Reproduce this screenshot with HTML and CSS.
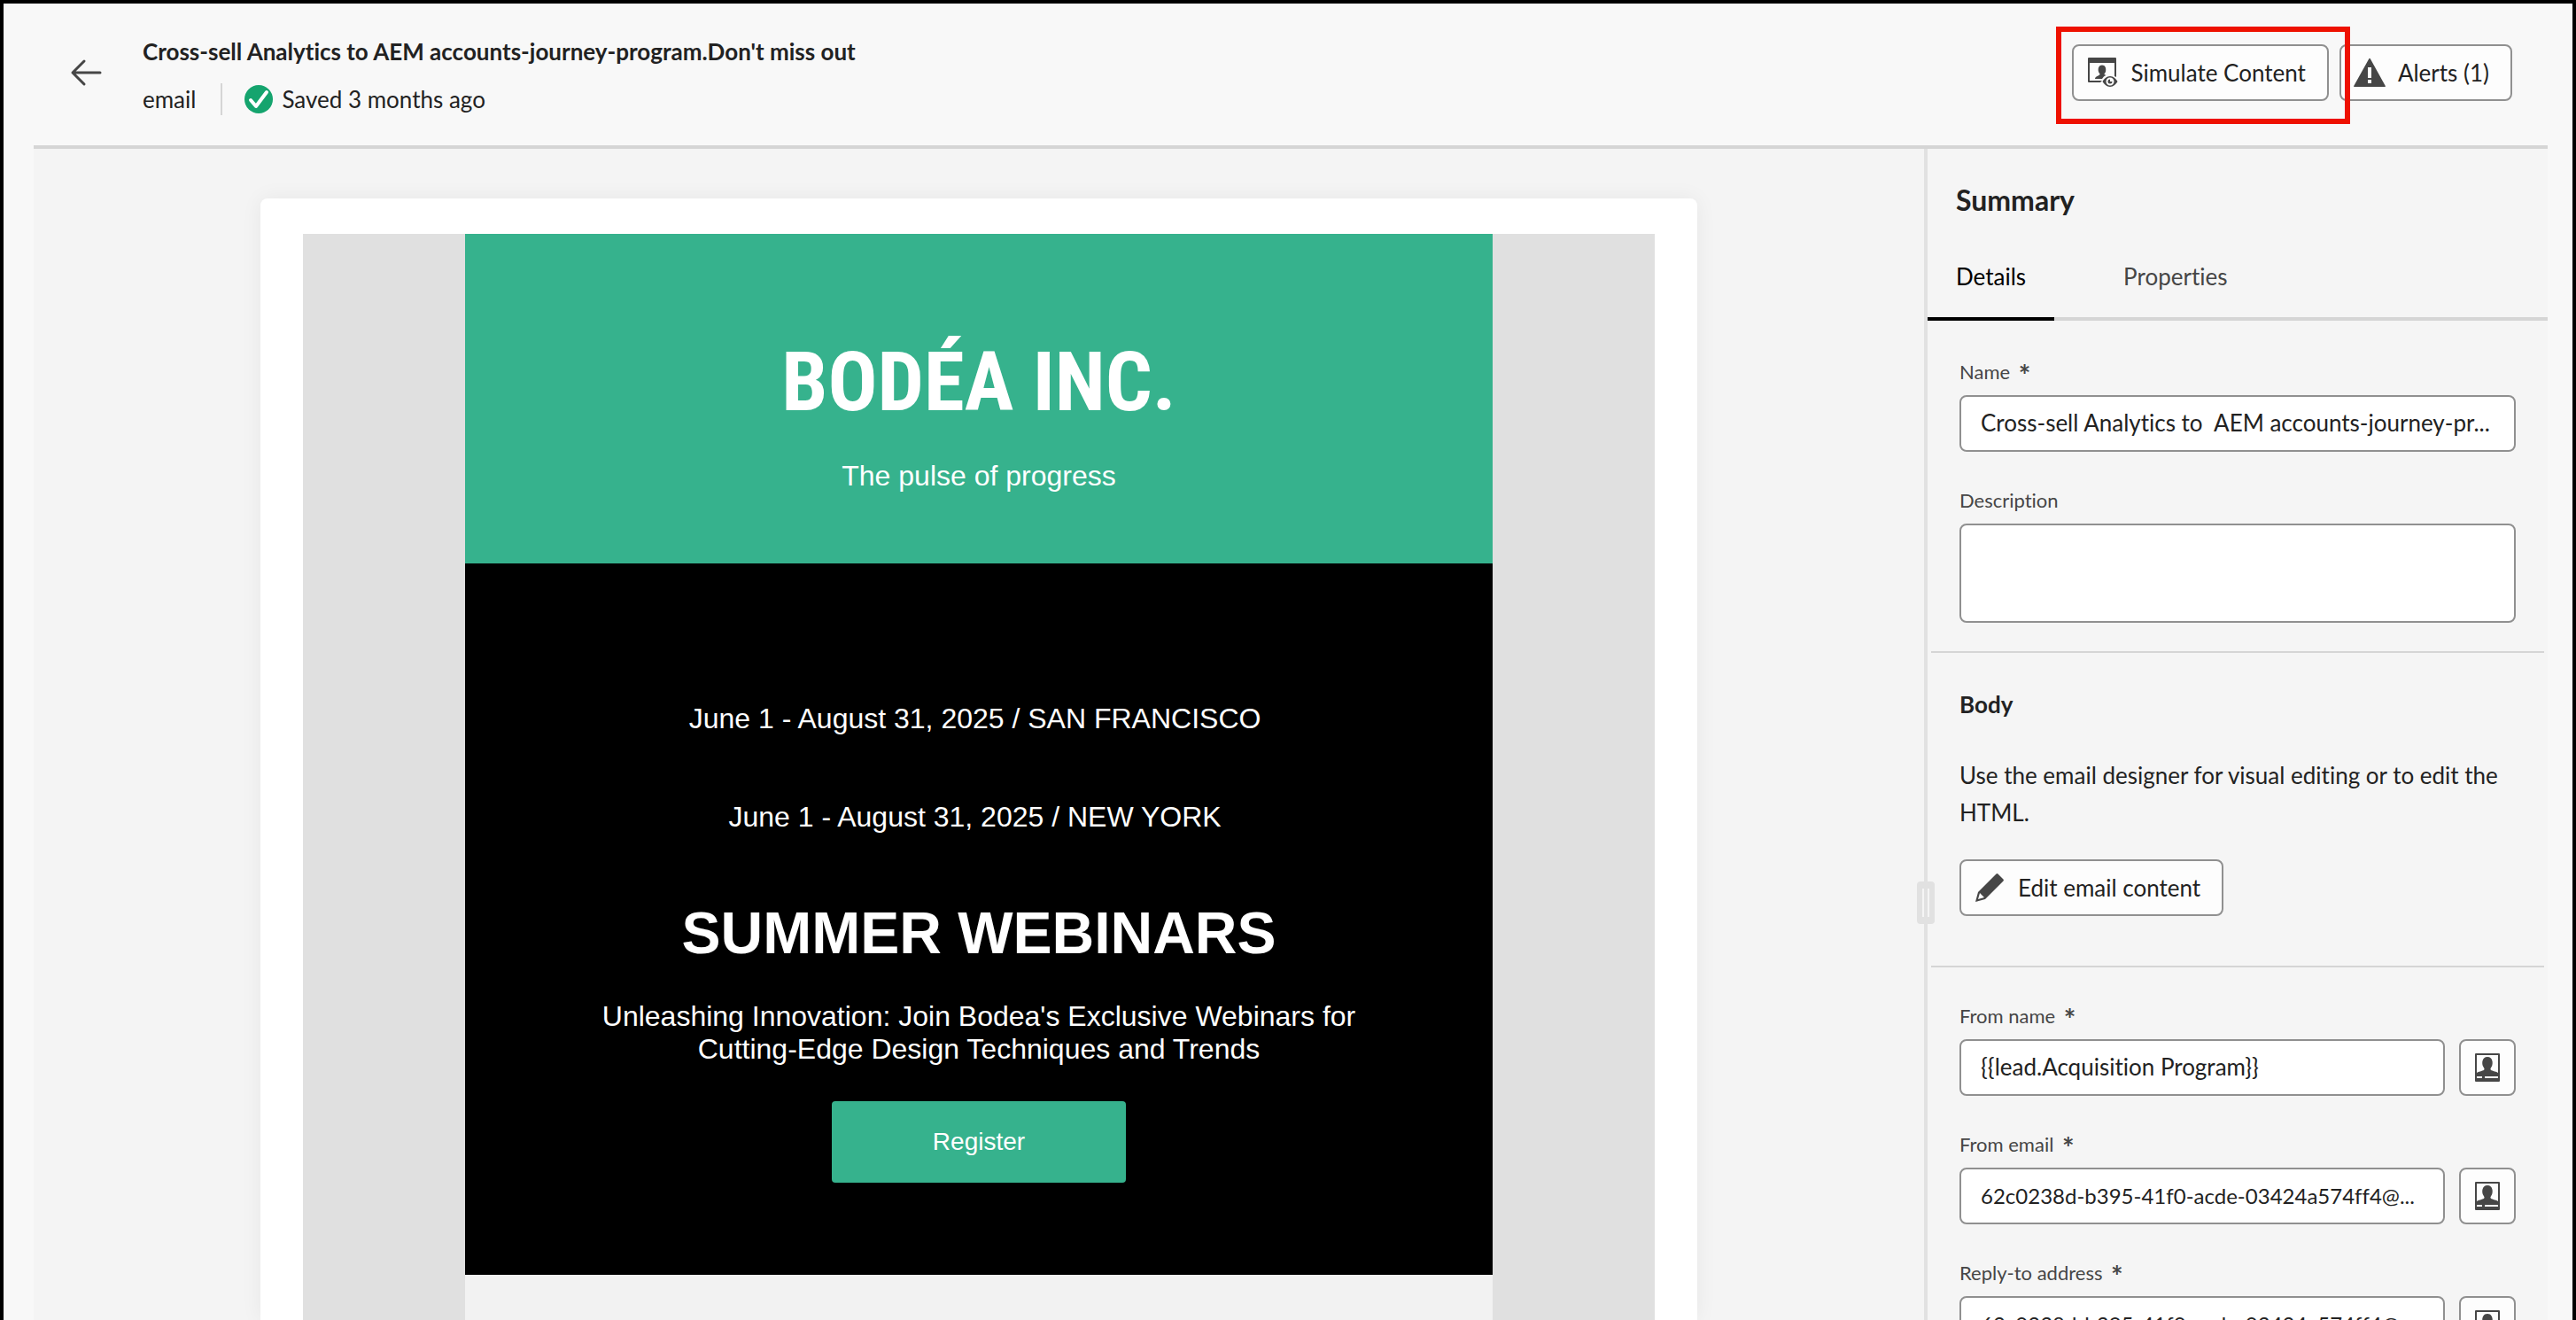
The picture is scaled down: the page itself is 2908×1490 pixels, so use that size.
FILE: index.html
```html
<!DOCTYPE html>
<html lang="en">
<head>
<meta charset="utf-8">
<meta name="viewport" content="width=device-width, initial-scale=1">
<title>Email - Don't miss out</title>
<link rel="stylesheet" href="styles.css">
</head>
<body>
<svg class="sprite" aria-hidden="true">
  <symbol id="icon-person" viewBox="0 0 36 36">
    <path fill-rule="evenodd" d="M5 2h26a1 1 0 0 1 1 1v30a1 1 0 0 1-1 1H5a1 1 0 0 1-1-1V3a1 1 0 0 1 1-1zM6 4v20c3-2 8-2 8.500-4 .3-1-.8-2-1.500-3.500-1.500-3-1.200-10.500 5-10.500s6.500 7.500 5 10.500c-.7 1.500-1.800 2.500-1.500 3.500.5 2 5.500 2 8.500 4V4zM6 28v2h6v-2zM15 28v2h15v-2z"/>
  </symbol>
</svg>
<div class="app">
  <header class="topbar">
    <button class="back" type="button" aria-label="Back">
      <svg width="36" height="32" viewBox="0 0 36 32" fill="none" stroke="currentColor" stroke-width="3" stroke-linecap="round" stroke-linejoin="round"><path d="M34 16H3M16 3L3 16l13 13"/></svg>
    </button>
    <div class="heading">
      <h1 class="title">Cross-sell Analytics to AEM accounts-journey-program.Don't miss out</h1>
      <div class="meta">
        <span class="kind">email</span>
        <span class="saved">
          <svg width="32" height="32" viewBox="0 0 32 32"><circle cx="16" cy="16" r="16" fill="#15a46e"/><path d="M7 17l6 7L25 8" fill="none" stroke="#fff" stroke-width="4" stroke-linecap="round" stroke-linejoin="round"/></svg>
          Saved 3 months ago
        </span>
      </div>
    </div>
    <div class="actions">
      <div class="highlight">
        <button class="button" type="button">
          <svg class="icon" viewBox="0 0 36 36">
            <path fill-rule="evenodd" d="M3 1h30a1 1 0 0 1 1 1v21l-2-1V7H4v20h14l-2 2H3a1 1 0 0 1-1-1V2a1 1 0 0 1 1-1z"/>
            <path d="M10 25c0-3 5-3.500 5.500-5 .2-1-1-1.500-1.500-3-1-4 .5-7.500 4-7.500s5 3.500 4 7.500c-.5 1.500-1.700 2-1.500 3l2 1c-2.500 1-3.500 2.500-4.500 4z"/>
            <path fill-rule="evenodd" d="M27 22c4 0 7 3.500 8.500 6-1.500 2.500-4.500 6-8.500 6s-7-3.500-8.500-6c1.500-2.500 4.500-6 8.500-6zm0 1.500a4.500 4.500 0 1 0 0 9 4.500 4.500 0 0 0 0-9zm0 2v2.500h2.500a2.500 2.500 0 1 1-2.500-2.500z"/>
          </svg>
          Simulate Content
        </button>
      </div>
      <button class="button" type="button">
        <svg class="icon" viewBox="0 0 36 36"><path fill-rule="evenodd" d="M17.200 2.500a1 1 0 0 1 1.700 0L35.800 33a.7.700 0 0 1-.6 1H.8a.7.700 0 0 1-.6-1zM16 12v12h4V12zM16 26v4h4v-4z"/></svg>
        Alerts (1)
      </button>
    </div>
  </header>

  <div class="workspace">
    <main class="canvas">
      <div class="sheet">
        <div class="mail-bg">
          <div class="mail">
            <section class="brand">
              <div class="logo">BODÉA INC.</div>
              <p class="copy">The pulse of progress</p>
            </section>
            <section class="event">
              <p class="copy date">June 1 - August 31, 2025 / SAN FRANCISCO&nbsp;</p>
              <p class="copy date">June 1 - August 31, 2025 / NEW YORK&nbsp;</p>
              <h2 class="event-title">SUMMER WEBINARS</h2>
              <p class="copy pitch">Unleashing Innovation: Join Bodea's Exclusive Webinars for Cutting-Edge Design Techniques and Trends</p>
              <a class="register" href="#register">Register</a>
            </section>
          </div>
        </div>
      </div>
    </main>

    <div class="splitter" role="separator" aria-orientation="vertical"><span class="grip"></span></div>

    <aside class="panel">
      <h2 class="panel-title">Summary</h2>
      <div class="tabs" role="tablist">
        <button class="tab tab-active" type="button" role="tab" aria-selected="true">Details</button>
        <button class="tab" type="button" role="tab" aria-selected="false">Properties</button>
      </div>
      <section class="group">
        <div class="field">
          <label class="label" for="name">Name <span class="star">*</span></label>
          <input class="input" id="name" type="text" value="Cross-sell Analytics to  AEM accounts-journey-pr...">
        </div>
        <div class="field">
          <label class="label" for="description">Description</label>
          <textarea class="input area" id="description"></textarea>
        </div>
      </section>
      <section class="group body-group">
        <h3 class="group-title">Body</h3>
        <p class="hint">Use the email designer for visual editing or to edit the HTML.</p>
        <button class="button" type="button">
          <svg class="icon" viewBox="0 0 36 36"><path fill-rule="evenodd" d="M25.500 2.500a1.500 1.500 0 0 1 2 0l6 6a1.500 1.500 0 0 1 0 2L13 31 2 34 5 23zM7 24L5 31l7-2z"/></svg>
          Edit email content
        </button>
      </section>
      <section class="group">
        <div class="field">
          <label class="label" for="from-name">From name <span class="star">*</span></label>
          <div class="row">
            <input class="input" id="from-name" type="text" value="{{lead.Acquisition Program}}">
            <button class="square" type="button" aria-label="Personalize from name"><svg class="icon"><use href="#icon-person"/></svg></button>
          </div>
        </div>
        <div class="field">
          <label class="label" for="from-email">From email <span class="star">*</span></label>
          <div class="row">
            <input class="input address" id="from-email" type="text" value="62c0238d-b395-41f0-acde-03424a574ff4@...">
            <button class="square" type="button" aria-label="Personalize from email"><svg class="icon"><use href="#icon-person"/></svg></button>
          </div>
        </div>
        <div class="field">
          <label class="label" for="reply-to">Reply-to address <span class="star">*</span></label>
          <div class="row">
            <input class="input address" id="reply-to" type="text" value="62c0238d-b395-41f0-acde-03424a574ff4@...">
            <button class="square" type="button" aria-label="Personalize reply-to address"><svg class="icon"><use href="#icon-person"/></svg></button>
          </div>
        </div>
      </section>
    </aside>
  </div>
</div>
</body>
</html>
```
FILE: styles.css
```css
* { box-sizing: border-box; }

body,
h1, h2, h3, p { margin: 0; }

body {
  background: #f8f8f8;
  color: #222;
  font-family: Lato, "Open Sans", sans-serif;
  font-size: 26px;
  line-height: 32px;
  font-variant-ligatures: none;
}

button,
input,
textarea {
  font: inherit;
  font-variant-ligatures: none;
  color: inherit;
  margin: 0;
}

.sprite { display: none; }

.app {
  display: flex;
  flex-direction: column;
  height: 100vh;
  overflow: hidden;
  border: 4px solid #000;
  border-bottom: 0;
}

/* Top bar */
.topbar {
  display: flex;
  align-items: flex-start;
  flex: none;
  padding: 38px 68px 34px 75px;
}

.back {
  display: flex;
  margin: 24px 46px 0 0;
  padding: 0;
  border: 0;
  background: none;
  color: #464646;
}

.heading { flex: 1; }

.title {
  font-size: 26px;
  line-height: 32px;
  font-weight: 700;
}

.meta {
  display: flex;
  align-items: center;
  margin-top: 20px;
  height: 36px;
}

.kind {
  padding-right: 28px;
  border-right: 2px solid #d5d5d5;
  line-height: 36px;
}

.saved {
  display: flex;
  align-items: center;
  gap: 10px;
  padding-left: 25px;
}

.actions {
  display: flex;
  gap: 12px;
  margin-top: 8px;
}

.button {
  display: inline-flex;
  align-items: center;
  gap: 14px;
  height: 64px;
  padding: 0 24px 0 14px;
  border: 2px solid #909090;
  border-radius: 8px;
  background: #fdfdfd;
  white-space: nowrap;
}

.icon {
  display: block;
  width: 36px;
  height: 36px;
  fill: #464646;
}

.highlight { position: relative; }

.highlight::after {
  content: "";
  position: absolute;
  inset: -20px -24px -26px -18px;
  z-index: 1;
  border: 6px solid #ee1100;
  pointer-events: none;
}

/* Workspace */
.workspace {
  display: flex;
  flex: 1;
  min-height: 0;
  margin: 0 28px 0 34px;
  border-top: 4px solid #d5d5d5;
  background: #f5f5f5;
}

.canvas {
  display: flex;
  flex: 1;
  min-width: 0;
  padding: 56px 256px 0;
  overflow: hidden;
  background: #f4f4f4;
}

.sheet {
  display: flex;
  flex: 1;
  padding: 40px 48px 0;
  border-radius: 8px 8px 0 0;
  background: #fff;
  box-shadow: 0 0 24px rgba(0, 0, 0, 0.06);
}

.mail-bg {
  display: flex;
  flex: 1;
  justify-content: center;
  background: #e0e0e0;
}

.mail {
  flex: 0 1 1160px;
  background: #f2f2f2;
  color: #fff;
  font-family: "Liberation Sans", Arial, sans-serif;
  text-align: center;
}

.brand {
  padding: 108px 0 80px;
  background: #36b28d;
}

.logo {
  margin-bottom: 27px;
  font-family: "Roboto Condensed", "Liberation Sans Narrow", "Liberation Sans", sans-serif;
  font-size: 93px;
  line-height: 120px;
  font-weight: 700;
}

.copy {
  font-size: 32px;
  line-height: 37px;
}

.event {
  display: flex;
  flex-direction: column;
  align-items: center;
  padding: 157px 0 104px;
  background: #000;
}

.date { margin-bottom: 74px; }

.event-title {
  margin-bottom: 38px;
  font-size: 66px;
  line-height: 76px;
}

.pitch {
  max-width: 900px;
  margin-bottom: 40px;
}

.register {
  padding: 30px 114px;
  border-radius: 4px;
  background: #36b28d;
  color: #fff;
  font-size: 28px;
  line-height: 32px;
  text-decoration: none;
}

/* Splitter between canvas and panel */
.splitter {
  position: relative;
  z-index: 1;
  flex: none;
  width: 4px;
  background: #e1e1e1;
}

.grip {
  position: absolute;
  top: 827px;
  left: -8px;
  display: flex;
  justify-content: center;
  gap: 4px;
  width: 20px;
  height: 48px;
  padding: 8px 0;
  border-radius: 4px;
  background: #e1e1e1;
}

.grip::before,
.grip::after {
  content: "";
  width: 2px;
  background: #f5f5f5;
}

/* Summary panel */
.panel {
  flex: none;
  width: 700px;
  padding-top: 38px;
  overflow: hidden;
}

.panel-title {
  padding: 0 32px;
  font-size: 32px;
  line-height: 40px;
}

.tabs {
  display: flex;
  gap: 46px;
  margin-top: 50px;
  box-shadow: inset 0 -4px #d5d5d5;
}

.tab {
  padding: 0 32px 30px;
  border: 0;
  border-bottom: 4px solid transparent;
  background: none;
  color: #464646;
}

.tab-active {
  border-color: #000;
  color: #000;
}

.group {
  display: flex;
  flex-direction: column;
  align-items: stretch;
  gap: 39px;
  margin: 0 4px;
  padding: 39px 32px 32px;
}

.tabs + .group { padding-top: 42px; }

.group + .group { border-top: 2px solid #d5d5d5; }

.body-group {
  align-items: flex-start;
  gap: 0;
  padding: 42px 32px 56px;
}

.group-title {
  font-size: 26px;
  line-height: 32px;
}

.hint {
  margin: 43px 0 32px;
  line-height: 42px;
}

.field {
  display: flex;
  flex-direction: column;
  gap: 10px;
}

.label {
  color: #464646;
  font-size: 22px;
  line-height: 32px;
}

.star {
  margin-left: 4px;
  font-size: 32px;
  line-height: 0;
  font-weight: 700;
  vertical-align: -8px;
}

.row {
  display: flex;
  gap: 16px;
}

.input {
  flex: 1;
  min-width: 0;
  height: 64px;
  padding: 0 22px 2px;
  border: 2px solid #909090;
  border-radius: 8px;
  background: #fff;
  text-overflow: ellipsis;
}

.field > .input { flex: none; }

.address { font-size: 24px; }

.area {
  height: 112px;
  resize: none;
}

.square {
  display: flex;
  align-items: center;
  justify-content: center;
  flex: none;
  width: 64px;
  height: 64px;
  padding: 0;
  border: 2px solid #909090;
  border-radius: 8px;
  background: #fdfdfd;
}
```
